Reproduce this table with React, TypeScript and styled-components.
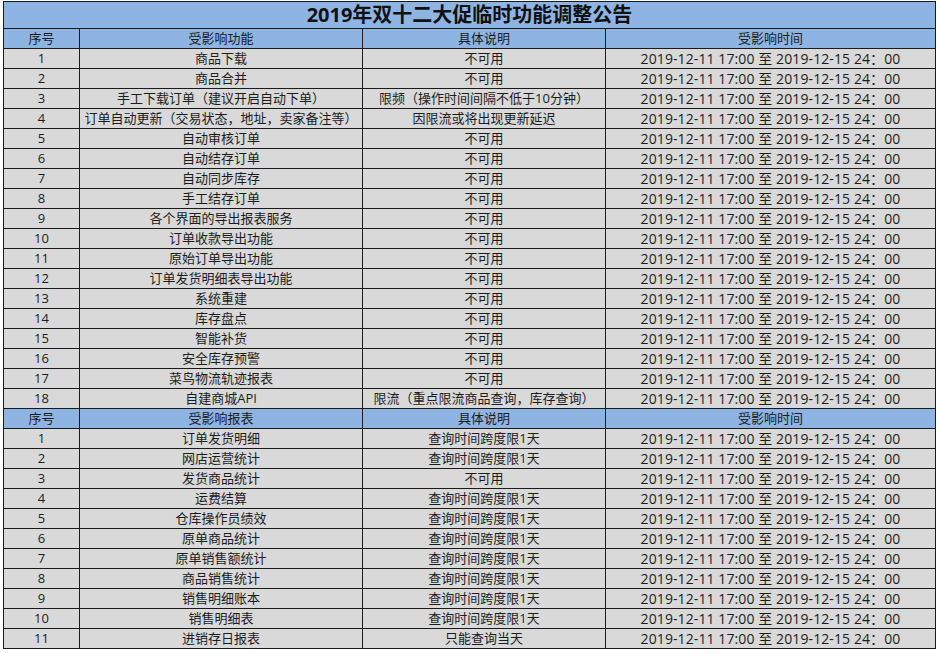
import styled, { createGlobalStyle } from 'styled-components'

const RANGE = '2019-12-11 17:00 至 2019-12-15 24：00'

interface Row {
  name: string
  note: string
}

const functionRows: Row[] = [
  { name: '商品下载', note: '不可用' },
  { name: '商品合并', note: '不可用' },
  { name: '手工下载订单（建议开启自动下单）', note: '限频（操作时间间隔不低于10分钟）' },
  { name: '订单自动更新（交易状态，地址，卖家备注等）', note: '因限流或将出现更新延迟' },
  { name: '自动审核订单', note: '不可用' },
  { name: '自动结存订单', note: '不可用' },
  { name: '自动同步库存', note: '不可用' },
  { name: '手工结存订单', note: '不可用' },
  { name: '各个界面的导出报表服务', note: '不可用' },
  { name: '订单收款导出功能', note: '不可用' },
  { name: '原始订单导出功能', note: '不可用' },
  { name: '订单发货明细表导出功能', note: '不可用' },
  { name: '系统重建', note: '不可用' },
  { name: '库存盘点', note: '不可用' },
  { name: '智能补货', note: '不可用' },
  { name: '安全库存预警', note: '不可用' },
  { name: '菜鸟物流轨迹报表', note: '不可用' },
  { name: '自建商城API', note: '限流（重点限流商品查询，库存查询）' },
]

const reportRows: Row[] = [
  { name: '订单发货明细', note: '查询时间跨度限1天' },
  { name: '网店运营统计', note: '查询时间跨度限1天' },
  { name: '发货商品统计', note: '不可用' },
  { name: '运费结算', note: '查询时间跨度限1天' },
  { name: '仓库操作员绩效', note: '查询时间跨度限1天' },
  { name: '原单商品统计', note: '查询时间跨度限1天' },
  { name: '原单销售额统计', note: '查询时间跨度限1天' },
  { name: '商品销售统计', note: '查询时间跨度限1天' },
  { name: '销售明细账本', note: '查询时间跨度限1天' },
  { name: '销售明细表', note: '查询时间跨度限1天' },
  { name: '进销存日报表', note: '只能查询当天' },
]

const GlobalStyle = createGlobalStyle`
  html, body {
    margin: 0;
    background: #ffffff;
  }
  body {
    padding: 1px 3px;
    font-family: "Open Sans", "Noto Sans CJK SC", sans-serif;
  }
`

const Sheet = styled.table`
  border-collapse: collapse;
  table-layout: fixed;
  width: 932px;
  color: #1c1c1c;
  font-size: 13px;
`

const TitleCell = styled.th`
  height: 26px;
  padding: 0;
  background: #8db4e2;
  border: 1px solid #1a1a1a;
  font-size: 20px;
  font-weight: 700;
  line-height: 26px;
  color: #111;
  text-align: center;
`

const HeadCell = styled.th`
  height: 19px;
  padding: 0;
  background: #8db4e2;
  border: 1px solid #1a1a1a;
  font-weight: 400;
  line-height: 19px;
  text-align: center;
  white-space: nowrap;
`

const Cell = styled.td<{ $wide?: boolean }>`
  height: 19px;
  padding: 0;
  background: #d9d9d9;
  border: 1px solid #1a1a1a;
  font-size: ${(p) => (p.$wide ? '14px' : '13px')};
  letter-spacing: ${(p) => (p.$wide ? '0.1px' : '0')};
  line-height: 19px;
  text-align: center;
  white-space: nowrap;
  overflow: visible;
`

const Section = ({ rows, label }: { rows: Row[]; label: string }) => (
  <>
    <tr>
      <HeadCell>序号</HeadCell>
      <HeadCell>{label}</HeadCell>
      <HeadCell>具体说明</HeadCell>
      <HeadCell>受影响时间</HeadCell>
    </tr>
    {rows.map((r, i) => (
      <tr key={r.name}>
        <Cell>{i + 1}</Cell>
        <Cell>{r.name}</Cell>
        <Cell>{r.note}</Cell>
        <Cell $wide>{RANGE}</Cell>
      </tr>
    ))}
  </>
)

const App = () => (
  <>
    <GlobalStyle />
    <Sheet>
      <colgroup>
        <col style={{ width: 76 }} />
        <col style={{ width: 283 }} />
        <col style={{ width: 243 }} />
        <col style={{ width: 330 }} />
      </colgroup>
      <tbody>
        <tr>
          <TitleCell colSpan={4}>2019年双十二大促临时功能调整公告</TitleCell>
        </tr>
        <Section rows={functionRows} label="受影响功能" />
        <Section rows={reportRows} label="受影响报表" />
      </tbody>
    </Sheet>
  </>
)

export default App
